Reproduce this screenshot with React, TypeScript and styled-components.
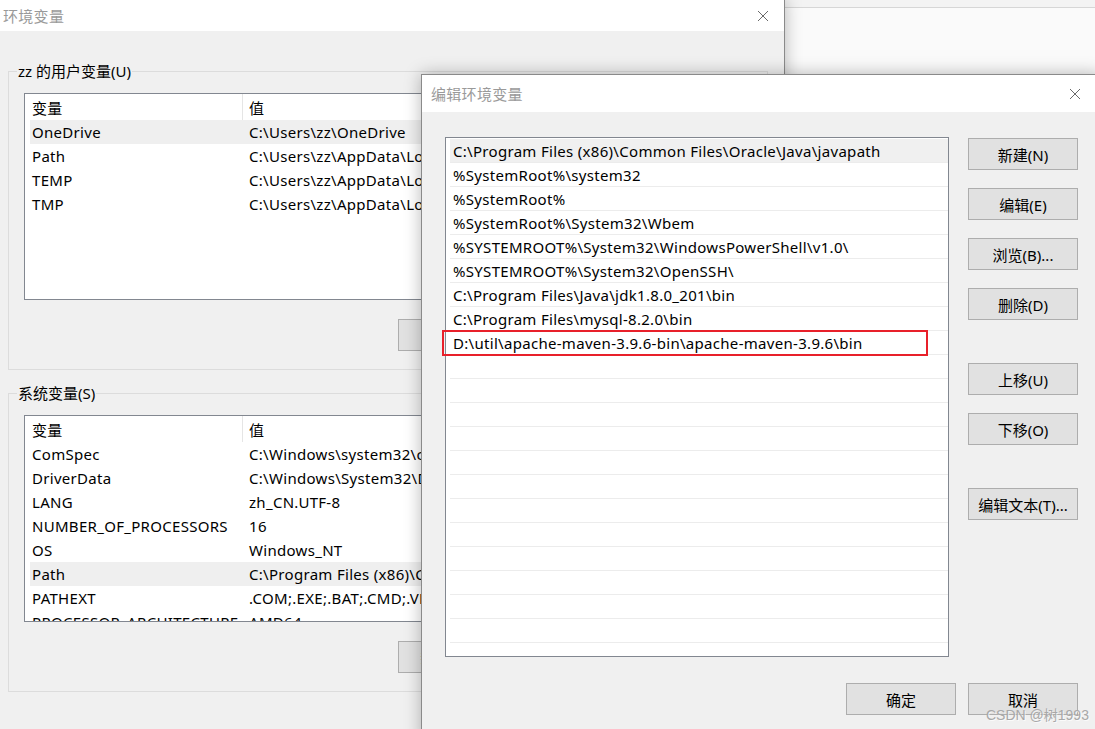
import React from "react";
import styled, { createGlobalStyle } from "styled-components";

const GlobalStyle = createGlobalStyle`
  html, body { margin: 0; padding: 0; background: #fafafa; overflow: hidden; }
  body { font-family: "Noto Sans", "Noto Sans CJK SC", sans-serif; font-size: 15px; color: #000; letter-spacing: 0.3px; }
  * { box-sizing: border-box; }
`;

const Desktop = styled.div`
  position: relative;
  width: 1095px;
  height: 729px;
  overflow: hidden;
  background: #fafafa;
`;

const BehindApp = styled.div`
  position: absolute;
  left: 784px;
  top: 0;
  width: 330px;
  height: 120px;
  background: #fafafa;
`;

const BehindStrip = styled.div`
  height: 8px;
  background: #f3f3f3;
  border-bottom: 1px solid #d6d6d6;
`;

const Window = styled.div<{ $left: number; $top: number; $width: number; $height: number }>`
  position: absolute;
  left: ${(p) => p.$left}px;
  top: ${(p) => p.$top}px;
  width: ${(p) => p.$width}px;
  height: ${(p) => p.$height}px;
  background: #f0f0f0;
  border: 1px solid #8a8a8a;
  box-shadow: 0 0 16px rgba(0, 0, 0, 0.28);
  display: flex;
  flex-direction: column;
`;

const TitleBar = styled.div<{ $h: number; $pl: number; $pr: number }>`
  height: ${(p) => p.$h}px;
  flex: none;
  background: #fff;
  display: flex;
  align-items: center;
  justify-content: space-between;
  padding-left: ${(p) => p.$pl}px;
  padding-right: ${(p) => p.$pr}px;
`;

const Title = styled.span`
  color: #9a9a9a;
  font-size: 15px;
  line-height: 20px;
`;

const CloseBox = styled.span`
  display: flex;
  width: 12px;
  height: 12px;
`;

const CloseIcon = () => (
  <CloseBox>
    <svg width="12" height="12" viewBox="0 0 12 12">
      <path d="M1 1 L11 11 M11 1 L1 11" stroke="#6a6a6a" strokeWidth="1" fill="none" />
    </svg>
  </CloseBox>
);

/* ---------- back dialog ---------- */

const BackBody = styled.div`
  padding: 30px 16px 0 8px;
  display: flex;
  flex-direction: column;
  gap: 13px;
`;

const Group = styled.fieldset`
  margin: 0;
  border: 1px solid #dcdcdc;
  padding: 12px 15px 18px 15px;
  min-width: 0;
  display: flex;
  flex-direction: column;
`;

const Legend = styled.legend`
  margin-left: -7px;
  padding: 0 1px;
  font-size: 15px;
  line-height: 20px;
  height: 20px;
  letter-spacing: 0;
`;

const VarList = styled.div`
  height: 207px;
  background: #fff;
  border: 1px solid #828790;
  overflow: hidden;
`;

const VarHeader = styled.div`
  height: 26px;
  display: grid;
  grid-template-columns: 218px 1fr;
  align-items: stretch;
`;

const HeadCell = styled.div<{ $first?: boolean }>`
  display: flex;
  align-items: center;
  padding-left: ${(p) => (p.$first ? 7 : 6)}px;
  border-right: ${(p) => (p.$first ? "1px solid #e5e5e5" : "none")};
  white-space: nowrap;
`;

const VarRow = styled.div<{ $sel?: boolean }>`
  height: 24px;
  margin-left: 5px;
  display: grid;
  grid-template-columns: 217px 1fr;
  align-items: center;
  background: ${(p) => (p.$sel ? "#efefef" : "transparent")};
  white-space: nowrap;
`;

const Cell = styled.span`
  padding-left: 2px;
  overflow: hidden;
  white-space: nowrap;
  line-height: 25px;
`;

const GroupButtons = styled.div`
  margin-top: 19px;
  display: flex;
  justify-content: flex-end;
  gap: 12px;
`;

const WinButton = styled.button`
  width: 110px;
  height: 32px;
  background: #e1e1e1;
  border: 1px solid #adadad;
  border-radius: 0;
  font-family: "Noto Sans", "Noto Sans CJK SC", sans-serif;
  font-size: 15px;
  letter-spacing: 0;
  color: #000;
  padding: 0;
  display: flex;
  align-items: center;
  justify-content: center;
  white-space: nowrap;
`;

/* ---------- front dialog ---------- */

const FrontBody = styled.div`
  padding: 25px 22px 0 23px;
  display: flex;
  flex-direction: column;
`;

const FrontMain = styled.div`
  display: flex;
  gap: 19px;
  align-items: flex-start;
`;

const PathList = styled.div`
  width: 504px;
  height: 520px;
  background: #fff;
  border: 1px solid #828790;
  padding: 1px 0 0 4px;
  overflow: hidden;
`;

const PathRow = styled.div<{ $sel?: boolean }>`
  height: 24px;
  border-bottom: 1px solid #ececec;
  background: ${(p) => (p.$sel ? "#f0f0f0" : "transparent")};
  padding-left: 3px;
  line-height: 25px;
  white-space: nowrap;
`;

const SideButtons = styled.div`
  display: flex;
  flex-direction: column;
  padding-top: 1px;
`;

const SideButton = styled(WinButton)<{ $gap: number }>`
  margin-top: ${(p) => p.$gap}px;
`;

const Footer = styled.div`
  margin-top: 26px;
  display: flex;
  justify-content: flex-end;
  gap: 12px;
`;

const Highlight = styled.div`
  position: absolute;
  left: 20px;
  top: 255px;
  width: 486px;
  height: 26px;
  border: 2px solid #e8202a;
`;

const Watermark = styled.div`
  position: absolute;
  left: 986px;
  top: 704px;
  font-family: "Liberation Sans", "Noto Sans CJK SC", sans-serif;
  font-size: 14px;
  letter-spacing: 0;
  color: #a8a8a8;
  text-shadow: 1px 1px 0 rgba(255, 255, 255, 0.7);
`;

const userVars: [string, string][] = [
  ["OneDrive", "C:\\Users\\zz\\OneDrive"],
  ["Path", "C:\\Users\\zz\\AppData\\Local\\Microsoft\\WindowsApps;"],
  ["TEMP", "C:\\Users\\zz\\AppData\\Local\\Temp"],
  ["TMP", "C:\\Users\\zz\\AppData\\Local\\Temp"],
];

const sysVars: [string, string][] = [
  ["ComSpec", "C:\\Windows\\system32\\cmd.exe"],
  ["DriverData", "C:\\Windows\\System32\\Drivers\\DriverData"],
  ["LANG", "zh_CN.UTF-8"],
  ["NUMBER_OF_PROCESSORS", "16"],
  ["OS", "Windows_NT"],
  ["Path", "C:\\Program Files (x86)\\Common Files\\Oracle\\Java\\javapath;"],
  ["PATHEXT", ".COM;.EXE;.BAT;.CMD;.VBS;.VBE;.JS;.JSE;.WSF;.WSH;.MSC"],
  ["PROCESSOR_ARCHITECTURE", "AMD64"],
];

const paths = [
  "C:\\Program Files (x86)\\Common Files\\Oracle\\Java\\javapath",
  "%SystemRoot%\\system32",
  "%SystemRoot%",
  "%SystemRoot%\\System32\\Wbem",
  "%SYSTEMROOT%\\System32\\WindowsPowerShell\\v1.0\\",
  "%SYSTEMROOT%\\System32\\OpenSSH\\",
  "C:\\Program Files\\Java\\jdk1.8.0_201\\bin",
  "C:\\Program Files\\mysql-8.2.0\\bin",
  "D:\\util\\apache-maven-3.9.6-bin\\apache-maven-3.9.6\\bin",
];

const VarTable = ({ rows, sel }: { rows: [string, string][]; sel: number }) => (
  <VarList>
    <VarHeader>
      <HeadCell $first>变量</HeadCell>
      <HeadCell>值</HeadCell>
    </VarHeader>
    {rows.map(([k, v], i) => (
      <VarRow key={k} $sel={i === sel}>
        <Cell>{k}</Cell>
        <Cell>{v}</Cell>
      </VarRow>
    ))}
  </VarList>
);

const sideButtons: [string, number][] = [
  ["新建(N)", 0],
  ["编辑(E)", 18],
  ["浏览(B)...", 18],
  ["删除(D)", 18],
  ["上移(U)", 43],
  ["下移(O)", 18],
  ["编辑文本(T)...", 43],
];

export default function App() {
  const rows = Array.from({ length: 23 }, (_, i) => paths[i] ?? "");
  return (
    <Desktop>
      <GlobalStyle />
      <BehindApp>
        <BehindStrip />
      </BehindApp>

      <Window $left={-1} $top={-1} $width={786} $height={740}>
        <TitleBar $h={31} $pl={3} $pr={15}>
          <Title>环境变量</Title>
          <CloseIcon />
        </TitleBar>
        <BackBody>
          <Group>
            <Legend>zz 的用户变量(U)</Legend>
            <VarTable rows={userVars} sel={0} />
            <GroupButtons>
              <WinButton>新建(N)...</WinButton>
              <WinButton>编辑(E)...</WinButton>
              <WinButton>删除(D)</WinButton>
            </GroupButtons>
          </Group>
          <Group>
            <Legend>系统变量(S)</Legend>
            <VarTable rows={sysVars} sel={5} />
            <GroupButtons>
              <WinButton>新建(W)...</WinButton>
              <WinButton>编辑(I)...</WinButton>
              <WinButton>删除(L)</WinButton>
            </GroupButtons>
          </Group>
        </BackBody>
      </Window>

      <Window $left={421} $top={74} $width={680} $height={670}>
        <TitleBar $h={37} $pl={9} $pr={19}>
          <Title>编辑环境变量</Title>
          <CloseIcon />
        </TitleBar>
        <FrontBody>
          <FrontMain>
            <PathList>
              {rows.map((p, i) => (
                <PathRow key={i} $sel={i === 0}>
                  {p}
                </PathRow>
              ))}
            </PathList>
            <SideButtons>
              {sideButtons.map(([t, g]) => (
                <SideButton key={t} $gap={g}>
                  {t}
                </SideButton>
              ))}
            </SideButtons>
          </FrontMain>
          <Footer>
            <WinButton>确定</WinButton>
            <WinButton>取消</WinButton>
          </Footer>
        </FrontBody>
        <Highlight />
      </Window>

      <Watermark>CSDN @树1993</Watermark>
    </Desktop>
  );
}
